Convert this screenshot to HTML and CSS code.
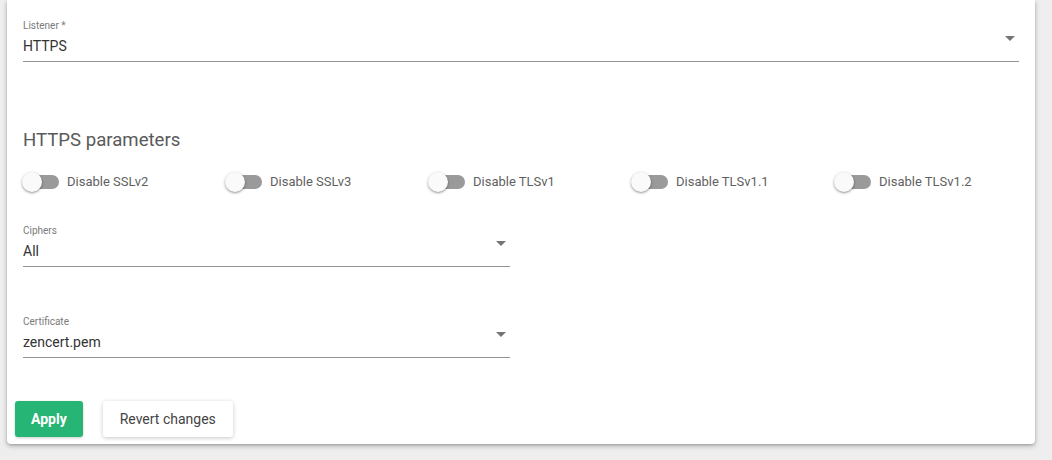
FILE: index.html
```html
<!DOCTYPE html>
<html>
<head>
<meta charset="utf-8">
<link rel="stylesheet" href="styles.css">
</head>
<body>
<div class="card">
  <div class="content">
    <div class="field full">
      <div class="label">Listener *</div>
      <div class="value"><span class="text">HTTPS</span><span class="arrow"></span></div>
    </div>

    <h2 class="heading">HTTPS parameters</h2>

    <div class="switches">
      <div class="switch"><span class="track"><span class="knob"></span></span><span class="slabel">Disable SSLv2</span></div>
      <div class="switch"><span class="track"><span class="knob"></span></span><span class="slabel">Disable SSLv3</span></div>
      <div class="switch"><span class="track"><span class="knob"></span></span><span class="slabel">Disable TLSv1</span></div>
      <div class="switch"><span class="track"><span class="knob"></span></span><span class="slabel">Disable TLSv1.1</span></div>
      <div class="switch"><span class="track"><span class="knob"></span></span><span class="slabel">Disable TLSv1.2</span></div>
    </div>

    <div class="field half ciphers">
      <div class="label">Ciphers</div>
      <div class="value"><span class="text">All</span><span class="arrow"></span></div>
    </div>

    <div class="field half cert">
      <div class="label">Certificate</div>
      <div class="value"><span class="text">zencert.pem</span><span class="arrow"></span></div>
    </div>
  </div>

  <div class="actions">
    <button class="btn btn-apply">Apply</button>
    <button class="btn btn-revert">Revert changes</button>
  </div>
</div>
</body>
</html>
```

FILE: styles.css
```css
html, body {
  margin: 0;
  padding: 0;
}
body {
  background: #eeeeee;
  font-family: Roboto, "Liberation Sans", sans-serif;
  width: 1052px;
  height: 460px;
  overflow: hidden;
}
.card {
  margin-left: 7px;
  width: 1028px;
  height: 444px;
  box-sizing: border-box;
  background: #ffffff;
  border-radius: 0 0 4px 4px;
  box-shadow: 0 2px 5px rgba(0, 0, 0, 0.28), 0 1px 2px rgba(0, 0, 0, 0.12);
  padding-top: 20px;
  display: flex;
  flex-direction: column;
}
.content {
  padding: 0 16px;
}
.field {
  display: flex;
  flex-direction: column;
  border-bottom: 1px solid #949494;
}
.field.full { width: 996px; }
.field.half { width: 487px; }
.field.ciphers { margin-top: 33px; }
.field.cert { margin-top: 49px; }
.label {
  font-size: 10px;
  line-height: 12px;
  color: #7a7a7a;
}
.value {
  margin-top: 4px;
  display: flex;
  align-items: flex-start;
  justify-content: space-between;
  padding-bottom: 5px;
}
.value .text {
  font-size: 14px;
  line-height: 20px;
  color: #333333;
}
.arrow {
  width: 0;
  height: 0;
  border-left: 5px solid transparent;
  border-right: 5px solid transparent;
  border-top: 5px solid #757575;
  margin-right: 4px;
}
.heading {
  margin: 66px 0 0 0;
  font-size: 18.6px;
  line-height: 24px;
  font-weight: 400;
  color: #5a5a5a;
}
.switches {
  margin-top: 20px;
  display: grid;
  grid-template-columns: repeat(5, 203px);
  height: 20px;
}
.switch {
  display: flex;
  align-items: center;
  height: 20px;
  padding-left: 2px;
}
.track {
  position: relative;
  width: 34px;
  height: 14px;
  border-radius: 7px;
  background: #9a9a9a;
  flex: none;
}
.knob {
  position: absolute;
  left: -3px;
  top: -3px;
  width: 20px;
  height: 20px;
  border-radius: 50%;
  background: #fafafa;
  box-shadow: 0 1px 3px rgba(0, 0, 0, 0.35), 0 1px 1px rgba(0, 0, 0, 0.12);
}
.slabel {
  margin-left: 8px;
  font-size: 13px;
  line-height: 20px;
  color: #5f5f5f;
  white-space: nowrap;
}
.actions {
  margin-top: 43px;
  padding-left: 8px;
  display: flex;
  gap: 20px;
}
.btn {
  height: 36px;
  border: none;
  border-radius: 3px;
  font-family: Roboto, "Liberation Sans", sans-serif;
  font-size: 14px;
  padding: 0 16px;
  cursor: pointer;
}
.btn-apply {
  background: #26b574;
  color: #ffffff;
  font-weight: 700;
  box-shadow: 0 1px 3px rgba(0, 0, 0, 0.2);
}
.btn-revert {
  background: #ffffff;
  color: #444444;
  font-weight: 400;
  padding: 0 17px;
  box-shadow: 0 1px 4px rgba(0, 0, 0, 0.22);
}
```
